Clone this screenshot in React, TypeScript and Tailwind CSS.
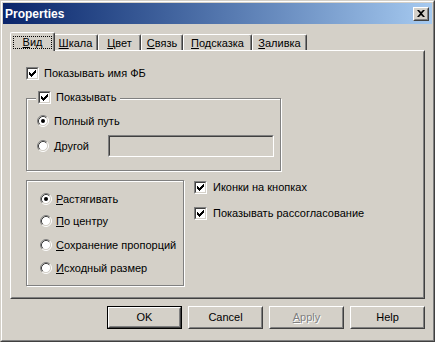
import React from "react";

function Check({ checked = true }: { checked?: boolean }) {
  return (
    <span className="relative inline-block w-[13px] h-[13px] shrink-0 border border-t-[#808080] border-l-[#808080] border-b-white border-r-white">
      <span className="block w-full h-full border border-t-[#404040] border-l-[#404040] border-b-[#d4d0c8] border-r-[#d4d0c8] bg-white" />
      {checked && (
        <svg width="7" height="7" viewBox="0 0 7 7" className="absolute left-[2px] top-[2px]">
          <path
            d="M0 2h1v3h-1zM1 3h1v3h-1zM2 4h1v3h-1zM3 3h1v3h-1zM4 2h1v3h-1zM5 1h1v3h-1zM6 0h1v3h-1z"
            fill="#000"
          />
        </svg>
      )}
    </span>
  );
}

function Radio({ checked = false }: { checked?: boolean }) {
  return (
    <svg width="12" height="12" viewBox="0 0 12 12" className="shrink-0 block">
      <circle cx="6" cy="6" r="4.5" fill="#fff" />
      <path d="M2.11 9.89 A5.5 5.5 0 0 1 9.89 2.11" fill="none" stroke="#808080" strokeWidth="1" />
      <path d="M9.89 2.11 A5.5 5.5 0 0 1 2.11 9.89" fill="none" stroke="#ffffff" strokeWidth="1" />
      <path d="M2.82 9.18 A4.5 4.5 0 0 1 9.18 2.82" fill="none" stroke="#404040" strokeWidth="1" />
      <path d="M9.18 2.82 A4.5 4.5 0 0 1 2.82 9.18" fill="none" stroke="#d4d0c8" strokeWidth="1" />
      {checked && <circle cx="6" cy="6" r="2" fill="#000" />}
    </svg>
  );
}

function Btn({
  children,
  def = false,
  disabled = false,
}: {
  children: React.ReactNode;
  def?: boolean;
  disabled?: boolean;
}) {
  const bevel = (
    <div className="w-full h-full border border-t-white border-l-white border-b-[#404040] border-r-[#404040]">
      <div
        className={
          "w-full h-full border border-t-transparent border-l-transparent border-b-[#808080] border-r-[#808080] flex items-center justify-center " +
          (disabled ? "text-[#808080] [text-shadow:1px_1px_0_#fff]" : "text-black")
        }
      >
        {children}
      </div>
    </div>
  );
  return (
    <div className={"w-[75px] h-[23px] " + (def ? "border border-black" : "")}>{bevel}</div>
  );
}

function TabSel({ children }: { children: React.ReactNode }) {
  return (
    <div className="relative z-10 -mx-[2px] -mb-px h-[19px] w-[45px] bg-[#d4d0c8] border-t border-l border-t-white border-l-white border-r border-r-[#404040] rounded-t-[2px] shadow-[inset_-1px_0_0_#808080]">
      <div className="absolute left-[2px] right-[2px] top-[3px] h-[13px] border border-dotted border-black flex items-center justify-center">
        {children}
      </div>
    </div>
  );
}

function Tab({ w, children }: { w: string; children: React.ReactNode }) {
  return (
    <div
      className={
        "h-[16px] border-t border-l border-t-white border-l-white border-r border-r-[#404040] rounded-t-[2px] shadow-[inset_-1px_0_0_#808080] flex items-center justify-center pt-[1px] " +
        w
      }
    >
      {children}
    </div>
  );
}

export default function App() {
  return (
    <div className="w-[435px] h-[342px] bg-[#d4d0c8] font-['Liberation_Sans',Arial,sans-serif] text-[11px] text-black leading-none select-none">
      <div className="w-full h-full border border-t-[#d4d0c8] border-l-[#d4d0c8] border-b-[#404040] border-r-[#404040]">
        <div className="w-full h-full border border-t-white border-l-white border-b-[#808080] border-r-[#808080] p-px flex flex-col">
          {/* Title bar */}
          <div className="h-[21px] shrink-0 bg-linear-to-r from-[#0a246a] to-[#a6caf0] flex items-center pl-[2px] pr-[3px]">
            <span className="flex-1 text-white font-bold text-[12px]">Properties</span>
            <div className="w-[16px] h-[14px] bg-[#d4d0c8] border border-t-white border-l-white border-b-[#404040] border-r-[#404040]">
              <div className="w-full h-full border border-t-transparent border-l-transparent border-b-[#808080] border-r-[#808080] flex items-center justify-center">
                <svg width="8" height="7" viewBox="0 0 8 7">
                  <path
                    d="M0 0h2l2 2l2-2h2l-3 3.5l3 3.5h-2l-2-2l-2 2h-2l3-3.5z"
                    fill="#000"
                  />
                </svg>
              </div>
            </div>
          </div>

          {/* Tabs */}
          <div className="flex items-end h-[18px] mt-[8px] pl-[9px] shrink-0">
            <TabSel>
              <span>
                <span className="underline">В</span>ид
              </span>
            </TabSel>
            <Tab w="w-[45px]">
              <span>
                <span className="underline">Ш</span>кала
              </span>
            </Tab>
            <Tab w="w-[43px]">
              <span>
                <span className="underline">Ц</span>вет
              </span>
            </Tab>
            <Tab w="w-[42px]">
              <span>
                <span className="underline">С</span>вязь
              </span>
            </Tab>
            <Tab w="w-[69px]">
              <span>
                <span className="underline">П</span>одсказка
              </span>
            </Tab>
            <Tab w="w-[55px]">
              <span>
                <span className="underline">З</span>аливка
              </span>
            </Tab>
          </div>

          {/* Panel */}
          <div className="mx-[7px] h-[249px] shrink-0 border border-t-white border-l-white border-b-[#404040] border-r-[#404040]">
            <div className="w-full h-full border border-t-transparent border-l-transparent border-b-[#808080] border-r-[#808080] pl-[14px] pt-[15px] flex flex-col">
              <div className="flex items-center gap-[5px] h-[13px]">
                <Check />
                <span>Показывать имя ФБ</span>
              </div>

              {/* Group 1 */}
              <div className="relative mt-[18px] w-[255px] h-[73px] border border-[#808080] shadow-[inset_1px_1px_0_#fff,1px_1px_0_#fff]">
                <div className="absolute left-[9px] -top-[8px] h-[13px] bg-[#d4d0c8] flex items-center gap-[5px] pl-[2px] pr-[4px]">
                  <Check />
                  <span>Показывать</span>
                </div>
                <div className="pl-[10px] pt-[15px] flex flex-col">
                  <div className="flex items-center gap-[5px] h-[14px]">
                    <Radio checked />
                    <span>Полный путь</span>
                  </div>
                  <div className="flex items-center mt-[7px] h-[22px]">
                    <Radio />
                    <span className="ml-[5px] w-[54px]">Другой</span>
                    <div className="w-[166px] h-[22px] border border-t-[#808080] border-l-[#808080] border-b-white border-r-white">
                      <div className="w-full h-full border border-t-[#404040] border-l-[#404040] border-b-[#d4d0c8] border-r-[#d4d0c8] bg-[#d4d0c8]" />
                    </div>
                  </div>
                </div>
              </div>

              {/* Bottom row */}
              <div className="flex mt-[9px]">
                <div className="w-[158px] h-[106px] border border-[#808080] shadow-[inset_1px_1px_0_#fff,1px_1px_0_#fff] pl-[13px] pt-[12px] flex flex-col">
                  <div className="flex items-center gap-[4px] h-[12px]">
                    <Radio checked />
                    <span>
                      <span className="underline">Р</span>астягивать
                    </span>
                  </div>
                  <div className="flex items-center gap-[4px] h-[12px] mt-[10px]">
                    <Radio />
                    <span>
                      <span className="underline">П</span>о центру
                    </span>
                  </div>
                  <div className="flex items-center gap-[4px] h-[12px] mt-[12px]">
                    <Radio />
                    <span>
                      <span className="underline">С</span>охранение пропорций
                    </span>
                  </div>
                  <div className="flex items-center gap-[4px] h-[12px] mt-[11px]">
                    <Radio />
                    <span>
                      <span className="underline">И</span>сходный размер
                    </span>
                  </div>
                </div>
                <div className="ml-[10px] pt-[1px] flex flex-col gap-[13px]">
                  <div className="flex items-center gap-[6px] h-[13px]">
                    <Check />
                    <span>Иконки на кнопках</span>
                  </div>
                  <div className="flex items-center gap-[6px] h-[13px]">
                    <Check />
                    <span>Показывать рассогласование</span>
                  </div>
                </div>
              </div>
            </div>
          </div>

          {/* Buttons */}
          <div className="flex justify-end gap-[6px] mt-[7px] pr-[7px] shrink-0">
            <Btn def>OK</Btn>
            <Btn>Cancel</Btn>
            <Btn disabled>
              <span>
                <span className="underline">A</span>pply
              </span>
            </Btn>
            <Btn>Help</Btn>
          </div>
        </div>
      </div>
    </div>
  );
}
